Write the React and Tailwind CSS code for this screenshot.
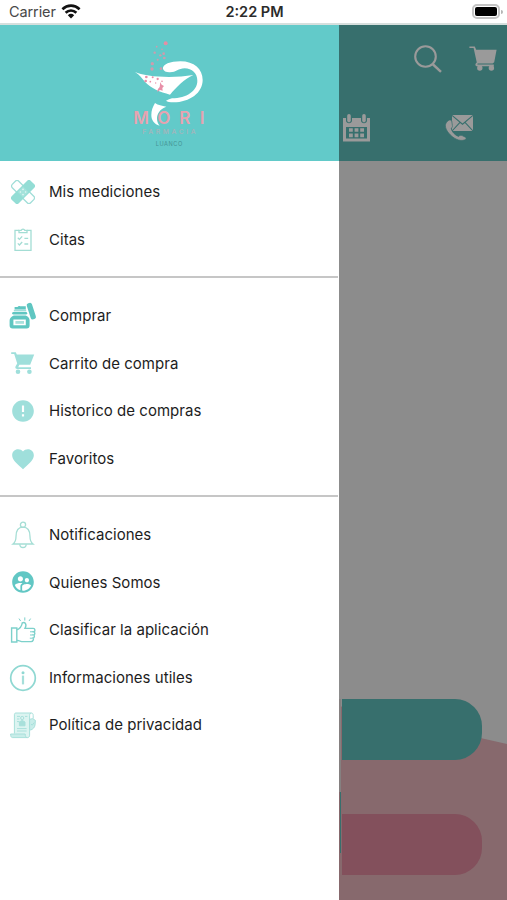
import React from 'react';
import { MdError, MdFavorite, MdSupervisedUserCircle } from 'react-icons/md';

const BandageIcon = () => (
  <svg viewBox="0 0 24 24" className="h-6 w-6">
    <rect
      x="-1"
      y="7.4"
      width="26"
      height="9.2"
      rx="2.4"
      fill="none"
      stroke="#a0ded8"
      strokeWidth="1.3"
      transform="rotate(45 12 12)"
    />
    <rect
      x="-1.4"
      y="7"
      width="26.8"
      height="10"
      rx="2.4"
      fill="#93ddd5"
      transform="rotate(-45 12 12)"
    />
    <path d="m12 6.6 5.4 5.4-5.4 5.4L6.6 12z" fill="#a4e2db" />
    <g fill="#e4f7f5">
      <circle cx="12" cy="9.4" r=".8" />
      <circle cx="9.4" cy="12" r=".8" />
      <circle cx="14.6" cy="12" r=".8" />
      <circle cx="12" cy="14.6" r=".8" />
    </g>
  </svg>
);

const ClipboardIcon = () => (
  <svg viewBox="0 0 24 24" className="h-6 w-6" fill="none" stroke="#a3ddd4" strokeWidth="1.3">
    <path d="M8 2.4H4v20h16v-20h-4" />
    <path d="M8 4.6V2.4h2.2a1.9 1.9 0 0 1 3.6 0H16v2.2z" />
    <path d="m6.8 9.8 1.6 1.6 2.8-3M6.8 15.4l1.6 1.6 2.8-3M13.4 10.4h3.8M13.4 16h3.8" />
  </svg>
);

const JarIcon = () => (
  <svg viewBox="0 0 28 28" className="h-7 w-7" fill="#5fc6c1">
    <path d="M5.6 7.4V5h3c.4-1 1.4-1.4 2.6-.8h5.6v3.2z" />
    <path d="M4.8 7.8h12.4v1.6H4.8z" opacity=".6" />
    <rect x="3.2" y="10" width="15" height="2.6" rx="1.3" />
    <path
      fillRule="evenodd"
      d="M4.8 13.4h12c2.8 1.2 3.8 2.8 3.8 5.2v5c0 2-1 3-3 3H3.6c-2 0-3-1-3-3v-5c0-2.4 1.4-4 4.2-5.2zm-.4 4.2v5.6h12.4v-5.6z"
    />
    <rect x="6.4" y="19" width="8.6" height="2.8" fill="#a9e0dc" />
    <rect x="19.6" y=".6" width="5.4" height="17" rx="2.2" transform="rotate(-18 22.4 9)" />
  </svg>
);

const CartIcon = () => (
  <svg viewBox="0 0 24 24" className="h-6 w-6" fill="#9fdfdb">
    <path d="M.2 1.2h4.6l1 2.4h17.4l-4 10.2H8.4l-1.2 2.4H20V18H6.4c-1.8 0-2.6-1.4-1.8-2.8l1.6-2.8L3.2 3h-3z" />
    <circle cx="7" cy="20.8" r="2.3" />
    <circle cx="18.4" cy="20.8" r="2.3" />
  </svg>
);

const BellIcon = () => (
  <svg viewBox="0 0 26 28" className="h-7 w-6.5" fill="none" stroke="#a5ded5" strokeWidth="1.3">
    <circle cx="13" cy="3.8" r="2.6" />
    <path d="M3 23c2.4-1.8 3-3.6 3-7.4 0-6 2.2-9.4 7-9.4s7 3.4 7 9.4c0 3.8.6 5.6 3 7.4z" />
    <path d="M9.8 23.2c.2 4.4 6.2 4.4 6.4 0" />
  </svg>
);

const ThumbIcon = () => (
  <svg viewBox="0 0 26 28" className="h-7 w-6.5" fill="none" stroke="#7dd1cb" strokeWidth="1.4">
    <path d="M1.6 12h5.2v14H1.6zM6.8 14c3.6-1.6 5-3.6 5.4-7 2.8-1.4 5 1 2.8 5.4h8.2c2.2 0 2.2 3 .6 3.4 1.6.6 1.2 3 0 3.2 1 .6.6 3-.6 3 .6 1.6-.2 3.6-2 3.6h-9.6l-4.8-1.4" />
    <path d="M14.8 4.6V1.4M10.6 5 9 2.6M19 5l1.6-2.4" strokeWidth="1" />
    <path d="M20 15.8h3.4M20 19h3.2M19.8 22.2h3" strokeWidth="1" />
  </svg>
);

const InfoIcon = () => (
  <svg viewBox="0 0 28 28" className="h-7 w-7 shrink-0">
    <circle cx="14" cy="14" r="12.3" fill="none" stroke="#8fd8d2" strokeWidth="1.7" />
    <circle cx="14" cy="8.7" r="1.5" fill="#8fd8d2" />
    <rect x="12.9" y="11.6" width="2.2" height="8.8" fill="#a5dfda" />
  </svg>
);

const PolicyIcon = () => (
  <svg viewBox="0 0 28 28" className="h-7 w-7" fill="none" stroke="#a8e0db" strokeWidth="1">
    <path
      d="M5.4 22.6V3.6c0-1 .6-1.6 1.6-1.6h15.2c-1.2.4-1.6 1.2-1.6 2.6v19.6c0 1.6-.8 2.4-2.2 2.4"
      fill="#dcf4f1"
    />
    <path d="M18.4 26.6H3.6c-1.6 0-2-1.6-2-3.6h14.6c0 2 .6 3.6 2.2 3.6z" fill="#c8ede9" />
    <path d="M22.2 2c1.6 0 2 1.2 2 2.6v3" />
    <path d="M8 5.4h3M8 8h2.4M8 10.6h2.4M8 17.6h9.6M8 20h9.6M16 5.4h2.4" />
    <circle cx="13.2" cy="7" r="1.6" />
    <path d="M10.4 14.8V11l2.8-1.6L16 11v3.8z" fill="#a8e0db" />
    <path d="m20.6 8.4 3-.8 2.8 1.8-.4 4.6c-.4 2.6-2 4-4.2 5l-1.2-.6z" fill="#c8ede9" />
    <path d="m22 13 1.2 1.2 2-2.6" />
  </svg>
);

const SECTIONS = [
  [
    { label: 'Mis mediciones', icon: <BandageIcon /> },
    { label: 'Citas', icon: <ClipboardIcon /> },
  ],
  [
    { label: 'Comprar', icon: <JarIcon /> },
    { label: 'Carrito de compra', icon: <CartIcon /> },
    { label: 'Historico de compras', icon: <MdError className="h-6.5 w-6.5 text-[#9fdfdb]" /> },
    { label: 'Favoritos', icon: <MdFavorite className="h-6.5 w-6.5 text-[#9fdfdb]" /> },
  ],
  [
    { label: 'Notificaciones', icon: <BellIcon /> },
    {
      label: 'Quienes Somos',
      icon: <MdSupervisedUserCircle className="h-6.5 w-6.5 text-[#62c7c4]" />,
    },
    { label: 'Clasificar la aplicación', icon: <ThumbIcon /> },
    { label: 'Informaciones utiles', icon: <InfoIcon /> },
    { label: 'Política de privacidad', icon: <PolicyIcon /> },
  ],
];

const StatusBar = () => (
  <div className="grid h-[25px] grid-cols-3 items-center border-b-2 border-[#d6dfdd] bg-white pr-1 pl-[9px] text-[14.5px] text-[#484848]">
    <div className="flex items-center gap-[5px]">
      <span className="pt-px tracking-[-0.1px]">Carrier</span>
      <svg viewBox="0 0 20 15" className="h-[15px] w-5" fill="none" stroke="#111" strokeWidth="2.6">
        <path d="M1.4 5.2c5-4.8 12.2-4.8 17.2 0M4.6 8.8c3.2-3 7.6-3 10.8 0" />
        <path d="M6.8 11.2c2-1.8 4.4-1.8 6.4 0L10 14.4z" fill="#111" stroke="none" />
      </svg>
    </div>
    <span className="pt-px pr-[3px] text-center font-semibold text-[#2b2b2b]">2:22 PM</span>
    <div className="flex items-center justify-end">
      <div className="h-[15px] w-[28px] rounded-[5px] border-2 border-[#c4c4c4] p-px">
        <div className="h-full rounded-[2px] bg-black" />
      </div>
      <div className="ml-px h-1 w-[2px] rounded-r bg-[#b5b5b5]" />
    </div>
  </div>
);

const Logo = () => (
  <svg viewBox="0 0 300 390" className="h-[130px] w-[100px]">
    <g fill="#fff">
      {/* cup */}
      <path d="M45 126c28 14 110 20 175 9-28 12-50 36-70 59-30-7-58-20-74-37-10-12-17-22-31-31z" />
      {/* snake */}
      <path d="M129 117c-2-14 22-23 52-23 42 0 67 24 67 56 0 38-38 67-88 67-10 0-18-2-22-5 6-2 12-6 18-7 44-1 76-22 76-53 0-22-16-37-38-37-20 0-26 13-46 12-10 0-17-4-19-10z" />
    </g>
    <g fill="#cf9cae">
      <circle cx="137" cy="40" r="6" fill="#e58fa5" />
      <circle cx="110" cy="50" r="2.5" />
      <circle cx="126" cy="58" r="2.5" />
      <circle cx="104" cy="68" r="3.5" />
      <circle cx="121" cy="76" r="3.5" />
      <circle cx="131" cy="71" r="4" />
      <circle cx="113" cy="89" r="3" />
      <circle cx="133" cy="84" r="4" />
      <circle cx="97" cy="101" r="5" />
      <circle cx="96" cy="117" r="5" />
      <circle cx="123" cy="116" r="4" />
    </g>
    <g fill="#e88fa8">
      <circle cx="79" cy="141" r="4" />
      <circle cx="98" cy="142" r="3" />
      <circle cx="113" cy="147" r="3.5" />
      <circle cx="77" cy="153" r="4" />
      <circle cx="91" cy="155" r="2.5" />
      <circle cx="126" cy="154" r="2.5" />
      <circle cx="107" cy="159" r="2" />
      <path d="m121 156 4 8 7 4-5 6 1 8-8-2-9 6 3-9 5-6z" />
    </g>
    <g fontFamily="Inter, sans-serif">
      <g fontSize="51" fontWeight="600" fill="#e7a3b0">
        <text x="40" y="282">M</text>
        <text x="112" y="282">O</text>
        <text x="178" y="282">R</text>
        <text x="239" y="282">I</text>
      </g>
      <text x="67" y="312" fontSize="20" fontWeight="600" fill="#a0b6bc" textLength="160">
        FARMACIA
      </text>
      <text x="107" y="349" fontSize="17" fill="#459495" textLength="80">
        LUANCO
      </text>
    </g>
    <path
      d="M105 219c10 7 20 8 34 11-20 7-28 22-28 36 0 8 3 15 8 21-16-4-25-16-25-32 0-14 4-24 11-36z"
      fill="#fff"
    />
  </svg>
);

const DrawerItem = ({ icon, label }) => (
  <li className="flex h-[47.65px] items-center">
    <span className="flex w-[45px] items-center justify-center">{icon}</span>
    <span className="pt-px pl-1 text-[15px] tracking-[0.03px] text-[#1d1d1d]">{label}</span>
  </li>
);

const Drawer = () => (
  <aside className="flex w-[339px] shrink-0 flex-col bg-white">
    <div className="flex h-[136px] justify-center bg-[#62cac9] pt-[5px] pl-px">
      <Logo />
    </div>
    <nav className="pt-[7.2px]">
      {SECTIONS.map((items, idx) => (
        <ul
          key={idx}
          className={idx > 0 ? 'mt-[13px] mr-px border-t-2 border-[#c6c6c6] pt-[13.4px]' : ''}
        >
          {items.map((item) => (
            <DrawerItem key={item.label} {...item} />
          ))}
        </ul>
      ))}
    </nav>
  </aside>
);

// The page behind the drawer, already dimmed by the overlay
const DimmedPage = () => (
  <main className="relative flex flex-1 flex-col overflow-hidden bg-[#8c8c8c]">
    <header className="flex h-[136px] flex-col justify-between bg-[#376f6d] pt-5 pb-[19px]">
      <div className="flex justify-end gap-[27px] pr-[10px]">
        <svg viewBox="0 0 28 29" className="h-[29px] w-7" fill="none" stroke="#9a9a9a" strokeWidth="2.1">
          <circle cx="11.5" cy="11.5" r="10.3" />
          <path d="m18.6 19 8.4 7.8" strokeWidth="2.4" />
        </svg>
        <svg viewBox="0 0 28 26" className="mt-px h-[26px] w-7" fill="#9a9a9a">
          <path d="M.4.6h5.4l1.4 3.2h20.4l-2.4 12.4-1.6 1.4H9c-1 .4-.8 1 .2 1h15.6v1.6H8.4c-2.2 0-2.8-2.4-.6-3.8L4.6 2H.4z" />
          <circle cx="10.8" cy="22" r="2.7" />
          <circle cx="22.4" cy="22" r="2.7" />
        </svg>
      </div>
      <div className="flex justify-between pr-[34px] pl-1">
        <svg viewBox="0 0 27 28" className="h-7 w-[27px]" fill="#9a9a9a">
          <path
            fillRule="evenodd"
            d="M0 4h3v2.6c0 3.6 6 3.6 6 0V4h9v2.6c0 3.6 6 3.6 6 0V4h3v23.6H0zm3 9v11.6h21V13z"
          />
          <rect x="4.2" y="0" width="3.6" height="8.4" rx="1.8" />
          <rect x="19.2" y="0" width="3.6" height="8.4" rx="1.8" />
          <path d="M6 14.2h3.8v3.6H6zM11.6 14.2h3.8v3.6h-3.8zM17.2 14.2H21v3.6h-3.8zM6 19.6h3.8v3.6H6zM11.6 19.6h3.8v3.6h-3.8zM17.2 19.6H21v3.6h-3.8z" />
        </svg>
        <svg viewBox="0 0 28 28" className="h-7 w-7" fill="#9a9a9a">
          <path d="M7 1h21v16H7z" />
          <path
            d="m7 1.4 10.5 8.8L28 1.4M7 17l8-8.6M28 17l-8-8.6"
            fill="none"
            stroke="#376f6d"
            strokeWidth="1.1"
          />
          <path
            d="M3.6 6.4C-.8 9.2-.6 13.8 3.6 19c4.4 5.4 10.8 8.6 15.8 7 2-.8 2.2-2 1-2.8l-3.2-1.6c-1.6-.6-2.6-.2-3.6.8-3.6-1.2-6.8-4.6-7.4-8 1-.8 1.4-1.6 1.2-2.8L6.8 7.4c-.6-1.4-1.8-1.8-3.2-1z"
            stroke="#376f6d"
            strokeWidth=".7"
          />
        </svg>
      </div>
    </header>

    <div className="relative flex flex-1 flex-col pt-[538px]">
      <div className="absolute inset-x-0 bottom-0 h-[194px] bg-[#87696d] [clip-path:polygon(0_0,100%_38px,100%_100%,0_100%)]" />
      <div className="absolute top-[538px] left-0 h-[93px] w-[2px] bg-[#858080]" />
      <div className="absolute top-[631px] left-px h-[61px] w-px bg-[#376f6d]" />
      <div className="relative ml-[3px] h-[61px] w-[140px] rounded-r-[27px] bg-[#376f6d]" />
      <div className="relative mt-[54px] ml-[3px] h-[61px] w-[140px] rounded-r-[27px] bg-[#83505c]" />
    </div>
  </main>
);

const App = () => {
  return (
    <div className="flex h-[900px] w-[507px] flex-col overflow-hidden font-['Inter',sans-serif]">
      <StatusBar />
      <div className="flex flex-1">
        <Drawer />
        <DimmedPage />
      </div>
    </div>
  );
};

export default App;
